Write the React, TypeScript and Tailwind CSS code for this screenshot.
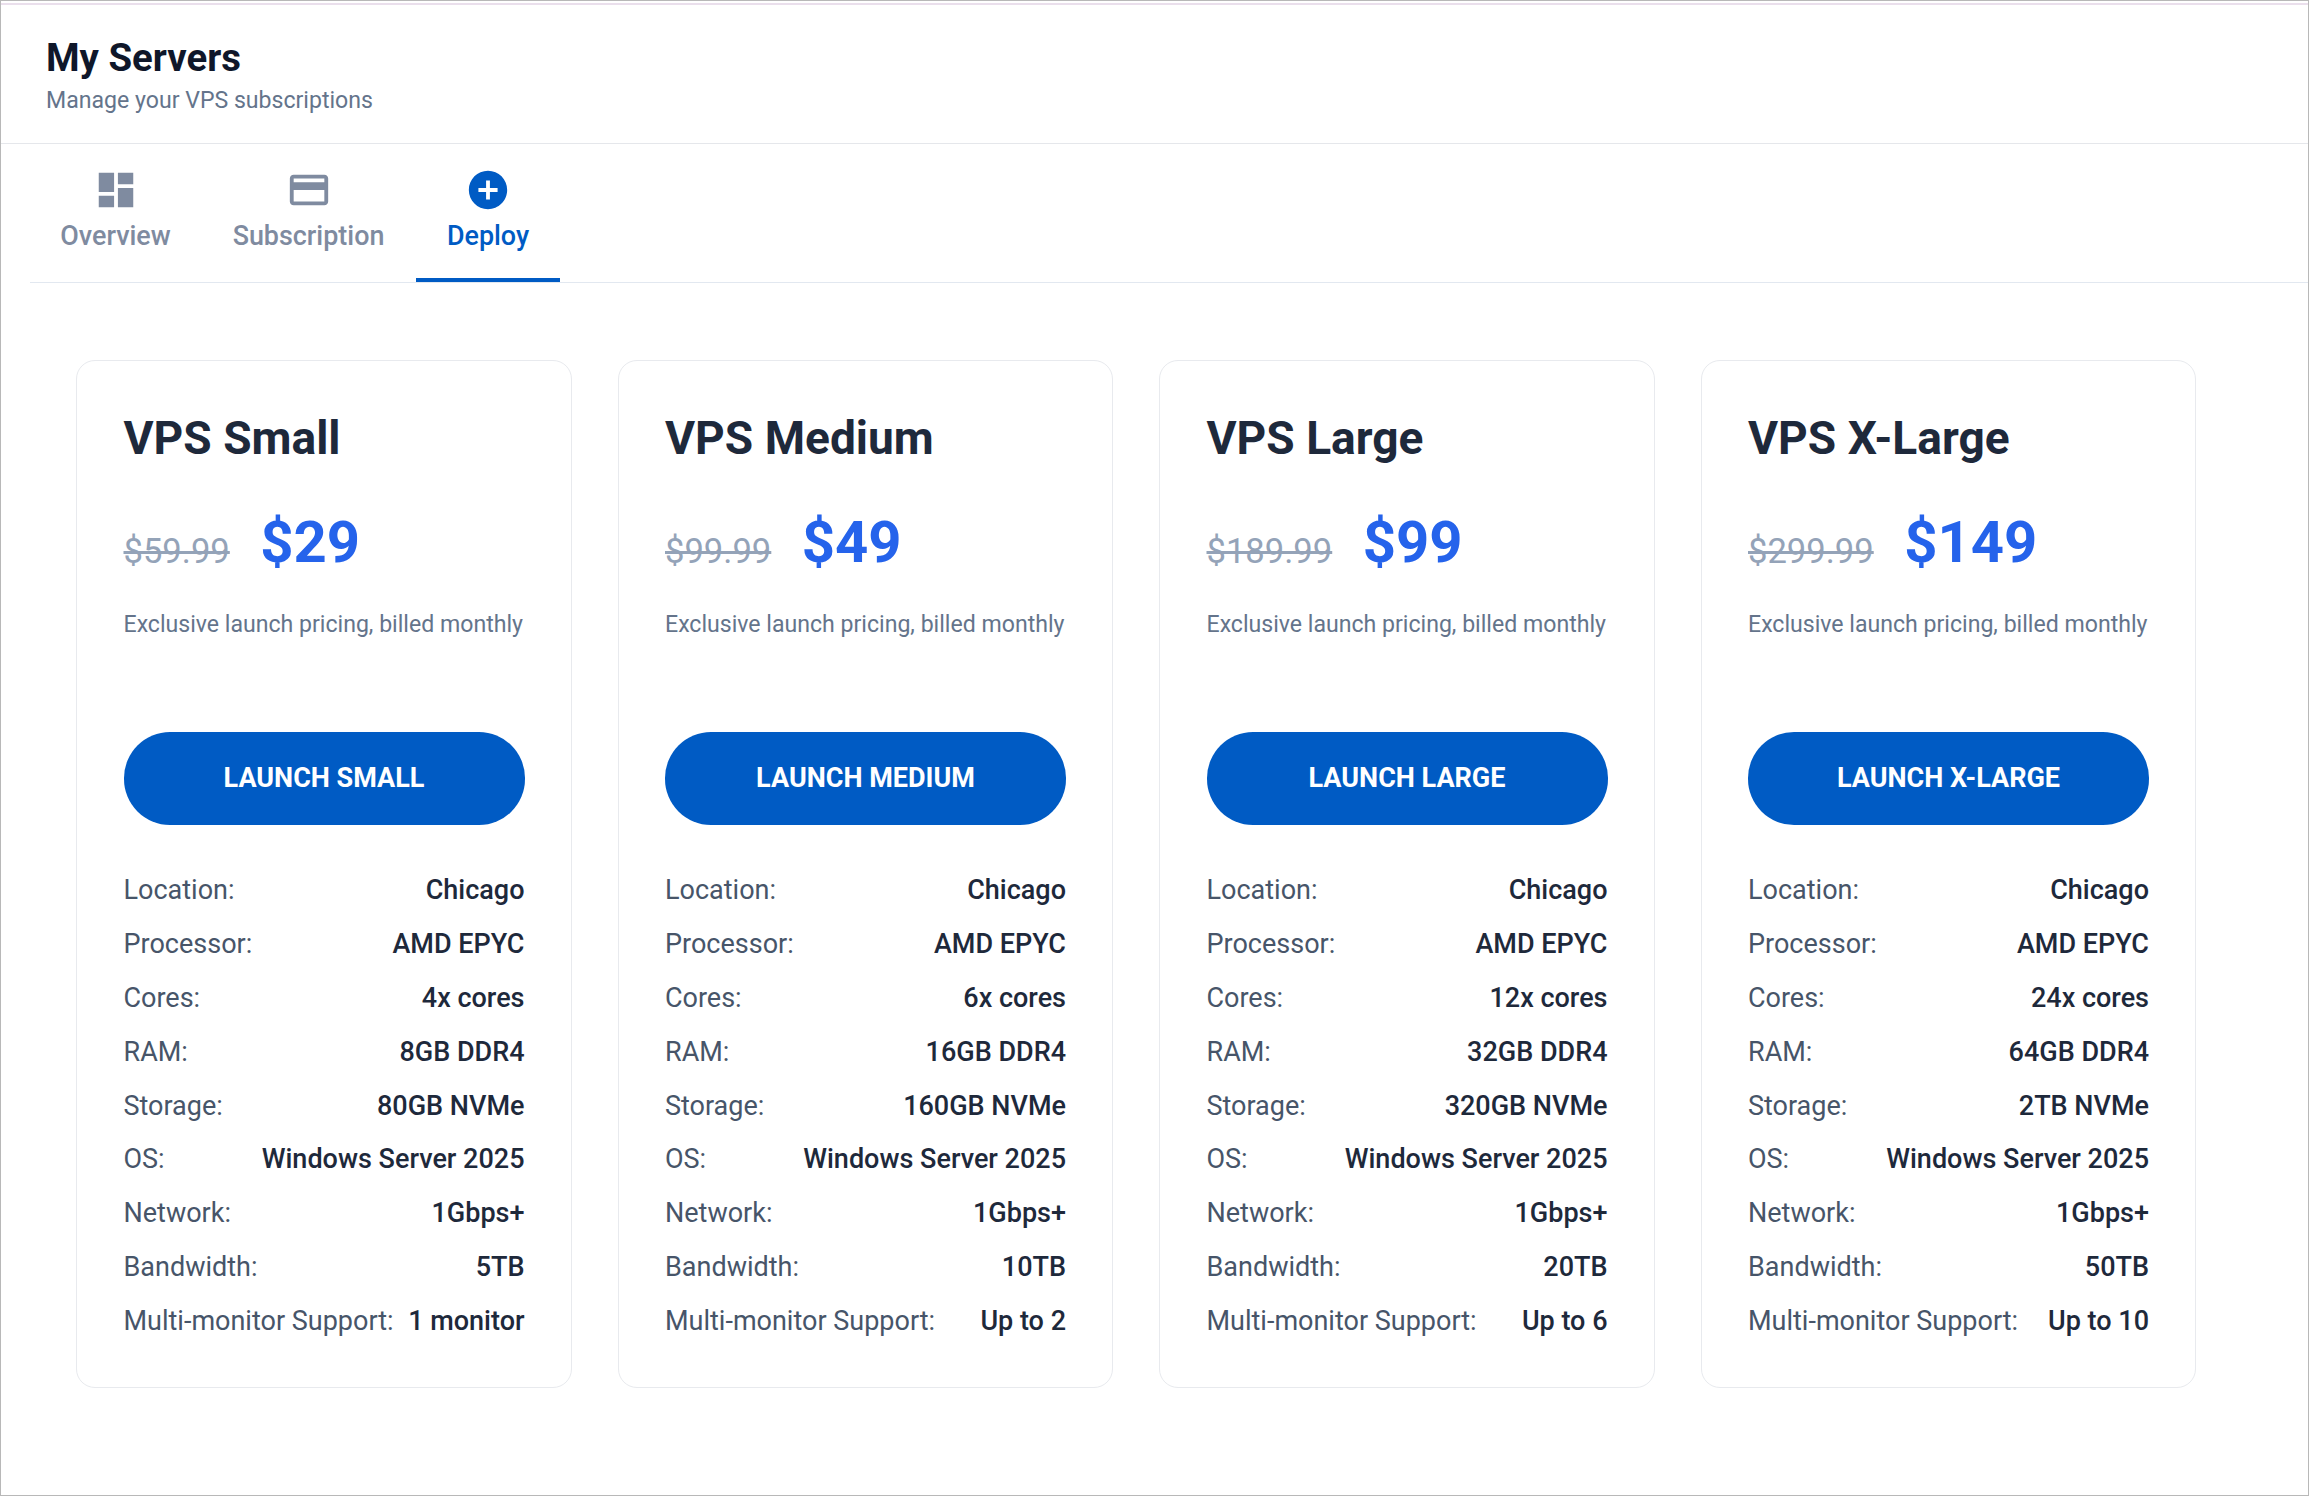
import React from 'react';
import { MdDashboard, MdCreditCard, MdAddCircle } from 'react-icons/md';

const plans = [
  { name: 'VPS Small', old: '$59.99', price: '$29', cta: 'LAUNCH SMALL', cores: '4x cores', ram: '8GB DDR4', storage: '80GB NVMe', bw: '5TB', mon: '1 monitor' },
  { name: 'VPS Medium', old: '$99.99', price: '$49', cta: 'LAUNCH MEDIUM', cores: '6x cores', ram: '16GB DDR4', storage: '160GB NVMe', bw: '10TB', mon: 'Up to 2' },
  { name: 'VPS Large', old: '$189.99', price: '$99', cta: 'LAUNCH LARGE', cores: '12x cores', ram: '32GB DDR4', storage: '320GB NVMe', bw: '20TB', mon: 'Up to 6' },
  { name: 'VPS X-Large', old: '$299.99', price: '$149', cta: 'LAUNCH X-LARGE', cores: '24x cores', ram: '64GB DDR4', storage: '2TB NVMe', bw: '50TB', mon: 'Up to 10' },
];

const PlanCard = ({ plan }: { plan: (typeof plans)[number] }) => {
  const specs = [
    ['Location:', 'Chicago'],
    ['Processor:', 'AMD EPYC'],
    ['Cores:', plan.cores],
    ['RAM:', plan.ram],
    ['Storage:', plan.storage],
    ['OS:', 'Windows Server 2025'],
    ['Network:', '1Gbps+'],
    ['Bandwidth:', plan.bw],
    ['Multi-monitor Support:', plan.mon],
  ];
  return (
    <div className="h-[1028px] rounded-[19px] border border-[#e8eaee] bg-white pl-[46.5px] pr-[46px] pt-[50px]">
      <h2 className="text-[46.1px] leading-[54px] font-bold text-[#1e293b]">{plan.name}</h2>
      <div className="mt-[42px] flex h-[70px] items-center gap-[30.5px]">
        <span className="mt-[19px] text-[34.6px] text-[#94a3b8] line-through">{plan.old}</span>
        <span className="text-[58px] leading-[70px] font-bold text-[#2563eb]">{plan.price}</span>
      </div>
      <p className="mt-[31px] text-[23.1px] leading-[34px] text-[#64748b]">Exclusive launch pricing, billed monthly</p>
      <button className="mt-[90px] h-[93px] w-full rounded-[46px] bg-[#005bc4] text-[27px] font-bold text-white">{plan.cta}</button>
      <div className="mt-[38.3px]">
        {specs.map(([k, v]) => (
          <div key={k} className="flex h-[53.9px] items-center justify-between text-[27px]">
            <span className="text-[#475569]">{k}</span>
            <span className="font-medium text-[#1e293b]">{v}</span>
          </div>
        ))}
      </div>
    </div>
  );
};

export default function App() {
  return (
    <div className="h-[1496px] border border-[#b8b8b8] bg-white font-['Roboto',sans-serif]">
      <div className="mt-[2px] h-[2px] bg-[#eadfec]" />
      <header className="h-[139px] border-b border-[#e5e7eb] pl-[45px] pt-[26px]">
        <h1 className="text-[38.4px] leading-[54px] font-bold text-[#0f172a]">My Servers</h1>
        <p className="text-[23.1px] leading-[32px] text-[#64748b]">Manage your VPS subscriptions</p>
      </header>
      <nav className="ml-[29px] flex h-[139px] border-b border-[#e2e8f0]">
        <div className="flex w-[171px] flex-col items-center pt-[23px] text-[#7f8ba0]">
          <MdDashboard className="text-[46px]" />
          <span className="mt-[3px] text-[26.9px] font-medium">Overview</span>
        </div>
        <div className="flex w-[215px] flex-col items-center pt-[23px] text-[#7f8ba0]">
          <MdCreditCard className="text-[46px]" />
          <span className="mt-[3px] text-[26.9px] font-medium">Subscription</span>
        </div>
        <div className="flex w-[144px] flex-col items-center border-b-4 border-[#005bc4] pt-[23px] text-[#005bc4]">
          <MdAddCircle className="text-[46px]" />
          <span className="mt-[3px] text-[26.9px] font-medium">Deploy</span>
        </div>
      </nav>
      <main className="grid w-[2195px] grid-cols-4 gap-[46px] pl-[75px] pt-[77px]">
        {plans.map((p) => (
          <PlanCard key={p.name} plan={p} />
        ))}
      </main>
    </div>
  );
}
